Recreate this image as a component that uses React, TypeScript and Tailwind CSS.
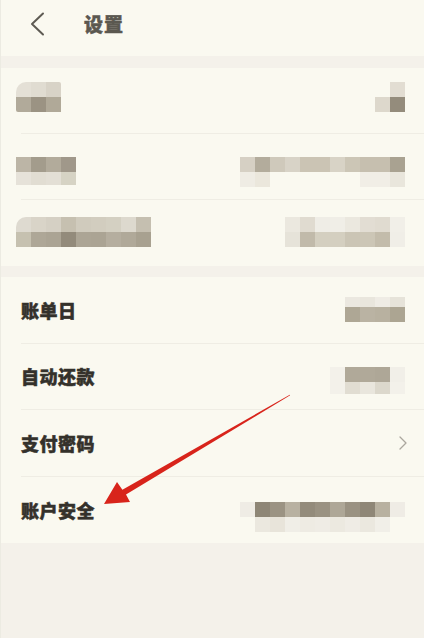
import React from "react";

type MRow = { h: string; cells: string[] };

function Mosaic({ rows, className = "" }: { rows: MRow[]; className?: string }) {
  return (
    <div className={"flex flex-col " + className}>
      {rows.map((r, i) => (
        <div key={i} className={"flex " + r.h}>
          {r.cells.map((c, j) => (
            <div key={j} className={"w-[15px] h-full " + c} />
          ))}
        </div>
      ))}
    </div>
  );
}

const T = "bg-transparent";

const s1r1L: MRow[] = [
  { h: "h-[15px]", cells: ["bg-[#e4e0d6] rounded-tl-[10px]", "bg-[#e0dcd1]", "bg-[#d8d3c7] rounded-tr-[2px]"] },
  { h: "h-[15px]", cells: ["bg-[#b1aa9a] rounded-bl-[2px]", "bg-[#9b9383]", "bg-[#b0a998]"] },
];
const s1r1R: MRow[] = [
  { h: "h-[15px]", cells: [T, "bg-[#e2ddd2]"] },
  { h: "h-[15px]", cells: ["bg-[#ddd8cc]", "bg-[#948c7c]"] },
];
const s1r2L: MRow[] = [
  { h: "h-[15px]", cells: ["bg-[#bcb5a6]", "bg-[#a39c8c]", "bg-[#b2ab9b]", "bg-[#a0988a]"] },
  { h: "h-[13px]", cells: ["bg-[#e6e2d9]", "bg-[#e1ddd2]", "bg-[#e3dfd5]", "bg-[#d6d3c4]"] },
];
const s1r2R: MRow[] = [
  {
    h: "h-[15px]",
    cells: ["bg-[#d6d0c4]", "bg-[#b3ac9c]", "bg-[#cfc9bb]", "bg-[#d8d3c7]", "bg-[#cbc4b4]", "bg-[#cbc4b4]", "bg-[#d8d3c6]", "bg-[#ccc6b6]", "bg-[#c6bfaf]", "bg-[#c6bfaf]", "bg-[#a9a291]"],
  },
  {
    h: "h-[15px]",
    cells: ["bg-[#efece4]", "bg-[#ebe7dc]", T, T, T, T, T, T, "bg-[#f1eee6]", "bg-[#f1eee6]", "bg-[#e9e6dc]"],
  },
];
const s1r3L: MRow[] = [
  {
    h: "h-[15px]",
    cells: ["bg-[#dedad0] rounded-tl-[10px]", "bg-[#d9d4c8]", "bg-[#d5d0c4]", "bg-[#c6c0b0]", "bg-[#d0cbbd]", "bg-[#d2cdbf]", "bg-[#d4d0c2]", "bg-[#ddd9ce]", "bg-[#c5bfb0]"],
  },
  {
    h: "h-[15px]",
    cells: ["bg-[#c6c1b0]", "bg-[#aea797]", "bg-[#aba494]", "bg-[#938b7b]", "bg-[#aca595]", "bg-[#aba494]", "bg-[#b5ae9f]", "bg-[#b0a999]", "bg-[#a8a190]"],
  },
];
const s1r3R: MRow[] = [
  { h: "h-[15px]", cells: ["bg-[#ebe8df]", "bg-[#e0dbd0]", "bg-[#efede6]", "bg-[#f0eee7]", "bg-[#ebe8df]", "bg-[#e2ddd3]", "bg-[#e0dbd0]", "bg-[#f1efe8]"] },
  { h: "h-[15px]", cells: ["bg-[#e6e3d9]", "bg-[#c1baaa]", "bg-[#d4cfc0]", "bg-[#d4cfc0]", "bg-[#cbc5b5]", "bg-[#ccc6b6]", "bg-[#c3bcab]", "bg-[#f0eee7]"] },
];
const s2r1R: MRow[] = [
  { h: "h-[10px]", cells: ["bg-[#ebe8e0]", "bg-[#e9e6dd]", "bg-[#efece5]", "bg-[#e6e3d9]"] },
  { h: "h-[15px]", cells: ["bg-[#aea795]", "bg-[#bab3a3]", "bg-[#b8b1a0]", "bg-[#aca592]"] },
];
const s2r2R: MRow[] = [
  { h: "h-[15px]", cells: ["bg-[#f3f1ea]", "bg-[#b0a999]", "bg-[#b0a999]", "bg-[#aea797]", "bg-[#f1efe8]"] },
  { h: "h-[12px]", cells: ["bg-[#f3f1ea]", "bg-[#e1ddd2]", "bg-[#e9e6dd]", "bg-[#dcd8cc]", "bg-[#f3f1ea]"] },
];
const s2r4R: MRow[] = [
  {
    h: "h-[15px]",
    cells: ["bg-[#efece5]", "bg-[#8e8676]", "bg-[#9b9383]", "bg-[#b8b1a1]", "bg-[#938b7b]", "bg-[#9a9282]", "bg-[#aea797]", "bg-[#9a9282]", "bg-[#8f8777]", "bg-[#b8b1a0]", "bg-[#efece5]"],
  },
  {
    h: "h-[15px]",
    cells: [T, "bg-[#ebe8df]", "bg-[#e8e4da]", "bg-[#f0eee7]", "bg-[#eeebe3]", "bg-[#efece5]", "bg-[#ece9e0]", "bg-[#efece5]", "bg-[#ebe8df]", "bg-[#f1efe8]", T],
  },
];

function Row({
  h,
  last,
  children,
}: {
  h: string;
  last?: boolean;
  children: React.ReactNode;
}) {
  return (
    <div className="pl-[20px]">
      <div
        className={
          "flex items-center justify-between pr-[19px] " +
          h +
          (last ? "" : " border-b border-[#efede4]")
        }
      >
        {children}
      </div>
    </div>
  );
}

function Label({ children }: { children: React.ReactNode }) {
  return (
    <span className="text-[18px] leading-[24px] font-black text-[#34312b] tracking-[0.5px] [-webkit-text-stroke:0.5px_#34312b]">
      {children}
    </span>
  );
}

export default function App() {
  return (
    <div
      className="relative w-[424px] h-[638px] overflow-hidden bg-[#f4f1ea] border-l border-[#ecebe2]"
      style={{ fontFamily: '"Noto Sans CJK SC", "Noto Sans", sans-serif' }}
    >
      {/* header */}
      <div className="h-[56px] bg-[#faf9f0] flex items-center pb-[9px]">
        <svg width="16" height="24" viewBox="0 0 16 24" className="ml-[29px]">
          <path d="M13 1.5 L2 12 L13 22.5" fill="none" stroke="#5e5b53" strokeWidth="2" strokeLinecap="round" strokeLinejoin="round" />
        </svg>
        <span className="ml-[38px] text-[19px] leading-[24px] font-black text-[#5b5850] tracking-[1px] [-webkit-text-stroke:0.5px_#5b5850]">设置</span>
      </div>

      <div className="h-[12px]" />

      {/* section 1 */}
      <div className="bg-[#faf9f0]">
        <Row h="h-[66px]">
          <Mosaic rows={s1r1L} className="-ml-[5px] self-start mt-[14px]" />
          <Mosaic rows={s1r1R} className="self-start mt-[14px]" />
        </Row>
        <Row h="h-[66px]">
          <Mosaic rows={s1r2L} className="-ml-[5px] self-start mt-[23px]" />
          <Mosaic rows={s1r2R} className="self-start mt-[23px]" />
        </Row>
        <Row h="h-[66px]" last>
          <Mosaic rows={s1r3L} className="-ml-[5px] self-start mt-[17px]" />
          <Mosaic rows={s1r3R} className="self-start mt-[17px]" />
        </Row>
      </div>

      <div className="h-[11px]" />

      {/* section 2 */}
      <div className="bg-[#faf9f0]">
        <Row h="h-[66.5px]">
          <Label>账单日</Label>
          <Mosaic rows={s2r1R} className="self-start mt-[20px]" />
        </Row>
        <Row h="h-[66.5px]">
          <Label>自动还款</Label>
          <Mosaic rows={s2r2R} className="self-start mt-[23px]" />
        </Row>
        <Row h="h-[66.5px]">
          <Label>支付密码</Label>
          <svg width="10" height="16" viewBox="0 0 10 16" className="-mr-[3px]">
            <path d="M2 2 L8 8 L2 14" fill="none" stroke="#aba79e" strokeWidth="1.3" strokeLinecap="round" strokeLinejoin="round" />
          </svg>
        </Row>
        <Row h="h-[66.5px]" last>
          <Label>账户安全</Label>
          <Mosaic rows={s2r4R} className="self-start mt-[25px]" />
        </Row>
      </div>

      {/* red annotation arrow */}
      <svg className="absolute left-0 top-0 pointer-events-none" width="424" height="638" viewBox="0 0 424 638">
        <polygon
          points="289.2,395.3 125,494.5 129,502 103,504 116,482 121.4,489.8 288.8,394.7"
          fill="#d8241b"
        />
      </svg>
    </div>
  );
}
